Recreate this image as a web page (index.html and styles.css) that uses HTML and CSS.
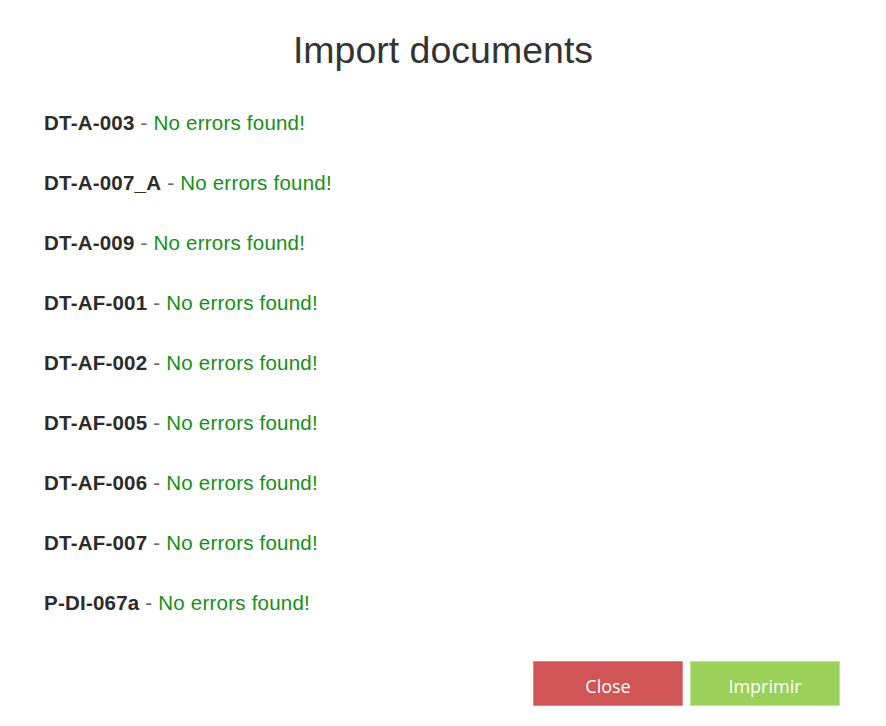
FILE: index.html
```html
<!DOCTYPE html>
<html lang="en">
<head>
<meta charset="utf-8">
<title>Import documents</title>
<link rel="stylesheet" href="styles.css">
</head>
<body>
<div class="modal">
  <h1 class="modal-title">Import documents</h1>
  <ul class="results">
    <li class="result"><span class="doc">DT-A-003</span> <span class="sep">-</span> <span class="ok">No errors found!</span></li>
    <li class="result"><span class="doc">DT-A-007_A</span> <span class="sep">-</span> <span class="ok">No errors found!</span></li>
    <li class="result"><span class="doc">DT-A-009</span> <span class="sep">-</span> <span class="ok">No errors found!</span></li>
    <li class="result"><span class="doc">DT-AF-001</span> <span class="sep">-</span> <span class="ok">No errors found!</span></li>
    <li class="result"><span class="doc">DT-AF-002</span> <span class="sep">-</span> <span class="ok">No errors found!</span></li>
    <li class="result"><span class="doc">DT-AF-005</span> <span class="sep">-</span> <span class="ok">No errors found!</span></li>
    <li class="result"><span class="doc">DT-AF-006</span> <span class="sep">-</span> <span class="ok">No errors found!</span></li>
    <li class="result"><span class="doc">DT-AF-007</span> <span class="sep">-</span> <span class="ok">No errors found!</span></li>
    <li class="result"><span class="doc">P-DI-067a</span> <span class="sep">-</span> <span class="ok">No errors found!</span></li>
  </ul>
  <div class="actions">
    <button class="btn btn-close" type="button">Close</button>
    <button class="btn btn-print" type="button">Imprimir</button>
  </div>
</div>
</body>
</html>
```

FILE: styles.css
```css
html, body {
  margin: 0;
  padding: 0;
  background: #ffffff;
}

body {
  font-family: "Liberation Sans", Arial, sans-serif;
  color: #333333;
}

.modal {
  width: 886px;
  height: 726px;
  box-sizing: border-box;
  padding-top: 29px;
  display: flex;
  flex-direction: column;
}

.modal-title {
  margin: 0 0 22px 0;
  font-family: "Liberation Sans", Arial, sans-serif;
  font-weight: normal;
  font-size: 37.5px;
  line-height: 42px;
  text-align: center;
  color: #333333;
}

.results {
  list-style: none;
  margin: 0;
  padding: 0 0 0 44px;
}

.result {
  height: 60px;
  line-height: 60px;
  font-size: 20.5px;
  letter-spacing: 0.22px;
  white-space: nowrap;
}

.doc {
  font-weight: bold;
  color: #2b2b2b;
}

.sep {
  color: #666666;
}

.ok {
  color: #178e17;
}

.actions {
  display: flex;
  justify-content: flex-end;
  gap: 7px;
  margin-top: 28px;
  padding-right: 46px;
}

.btn {
  width: 150px;
  height: 45px;
  box-sizing: border-box;
  font-family: "Open Sans", "Segoe UI", sans-serif;
  font-size: 18px;
  color: #ffffff;
  padding: 4px 0 0 0;
  cursor: pointer;
}

.btn-close {
  background: #d05556;
  border: 1px solid #e48587;
}

.btn-print {
  background: #9bd05a;
  border: 1px solid #bce596;
}
```
